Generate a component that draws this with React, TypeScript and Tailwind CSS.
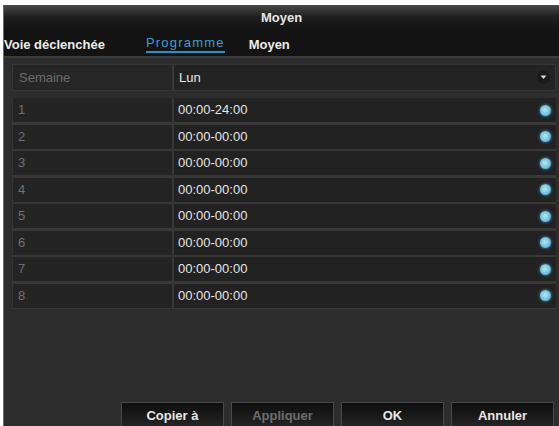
import React from 'react';

const slots = [
  { id: 1, time: '00:00-24:00' },
  { id: 2, time: '00:00-00:00' },
  { id: 3, time: '00:00-00:00' },
  { id: 4, time: '00:00-00:00' },
  { id: 5, time: '00:00-00:00' },
  { id: 6, time: '00:00-00:00' },
  { id: 7, time: '00:00-00:00' },
  { id: 8, time: '00:00-00:00' },
];

const Dot = () => (
  <span className="w-[11px] h-[11px] rounded-full bg-[radial-gradient(circle_at_45%_45%,#b8e6f5_0%,#72c2e0_55%,#3e8fb0_100%)] shadow-[0_0_3px_#4aa8cc]" />
);

const Btn = ({ label, disabled }: { label: string; disabled?: boolean }) => (
  <button
    className={`w-[103px] h-[26px] border-t border-x border-[#4a4a4a] bg-gradient-to-b from-[#0e0e0e] to-[#262626] text-[13px] font-bold ${
      disabled ? 'text-[#6e6e6e]' : 'text-[#e8e8e8]'
    }`}
  >
    {label}
  </button>
);

export default function App() {
  return (
    <div
      className="w-[559px] h-[426px] bg-white overflow-hidden pt-[5px] pl-[3px]"
      style={{ fontFamily: '"Liberation Sans", Arial, sans-serif' }}
    >
      <div className="h-[421px] flex flex-col border-l border-[#6a6a6a] bg-[#2d2d2d]">
        <div className="h-[24px] shrink-0 flex items-center justify-center bg-gradient-to-b from-[#4a4a4a] via-[#1e1e1e] to-[#141414] text-[13px] font-bold text-[#e6e6e6] pt-[1px]">
          Moyen
        </div>
        <div className="h-[27px] shrink-0 bg-[#131313] flex items-start pt-[6px] text-[13px] text-[#ececec]">
          <span className="font-bold">Voie déclenchée</span>
          <span className="ml-[41px] text-[#3a9fd0] tracking-[1.2px] border-b-2 border-[#2f8fc2] leading-[15px] pb-[1px]">
            Programme
          </span>
          <span className="ml-[24px] font-bold">Moyen</span>
        </div>
        <div className="h-[2px] shrink-0 bg-[#3c3c3c]" />
        <div className="flex-1 flex flex-col pl-[8px] pr-[3px] pt-[6px]">
          <div className="h-[27px] flex text-[13px] mb-[7px]">
            <div className="w-[161px] bg-[#262626] border border-[#363636] flex items-center pl-[6px] text-[#6c6c6c]">
              Semaine
            </div>
            <div className="flex-1 bg-[#232323] border border-[#363636] border-l-[#3c3c3c] flex items-center pl-[5px] pr-[5px] text-[#e6e6e6]">
              <span className="flex-1">Lun</span>
              <span className="w-[13px] h-[13px] rounded-full bg-[#1a1a1a] flex items-center justify-center">
                <svg width="7" height="5" viewBox="0 0 7 5">
                  <path d="M0.5 0.5 L3.5 4 L6.5 0.5 Z" fill="#d8d8d8" />
                </svg>
              </span>
            </div>
          </div>
          <div className="flex flex-col gap-[2.5px] bg-[#383838] border-b border-[#383838]">
            {slots.map((s) => (
              <div key={s.id} className="h-[24px] flex text-[13px]">
                <div className="w-[162px] bg-[#242424] border-l border-[#343434] border-r-2 border-r-[#383838] flex items-center pl-[5px] text-[#707070]">
                  {s.id}
                </div>
                <div className="flex-1 bg-[#222222] flex items-center pl-[4px] pr-[5px] text-[#e6e6e6]">
                  <span className="flex-1">{s.time}</span>
                  <Dot />
                </div>
              </div>
            ))}
          </div>
          <div className="flex-1" />
          <div className="flex justify-end gap-[7px] pr-[2px] h-[24px] items-start overflow-hidden">
            <Btn label="Copier à" />
            <Btn label="Appliquer" disabled />
            <Btn label="OK" />
            <Btn label="Annuler" />
          </div>
        </div>
      </div>
    </div>
  );
}
